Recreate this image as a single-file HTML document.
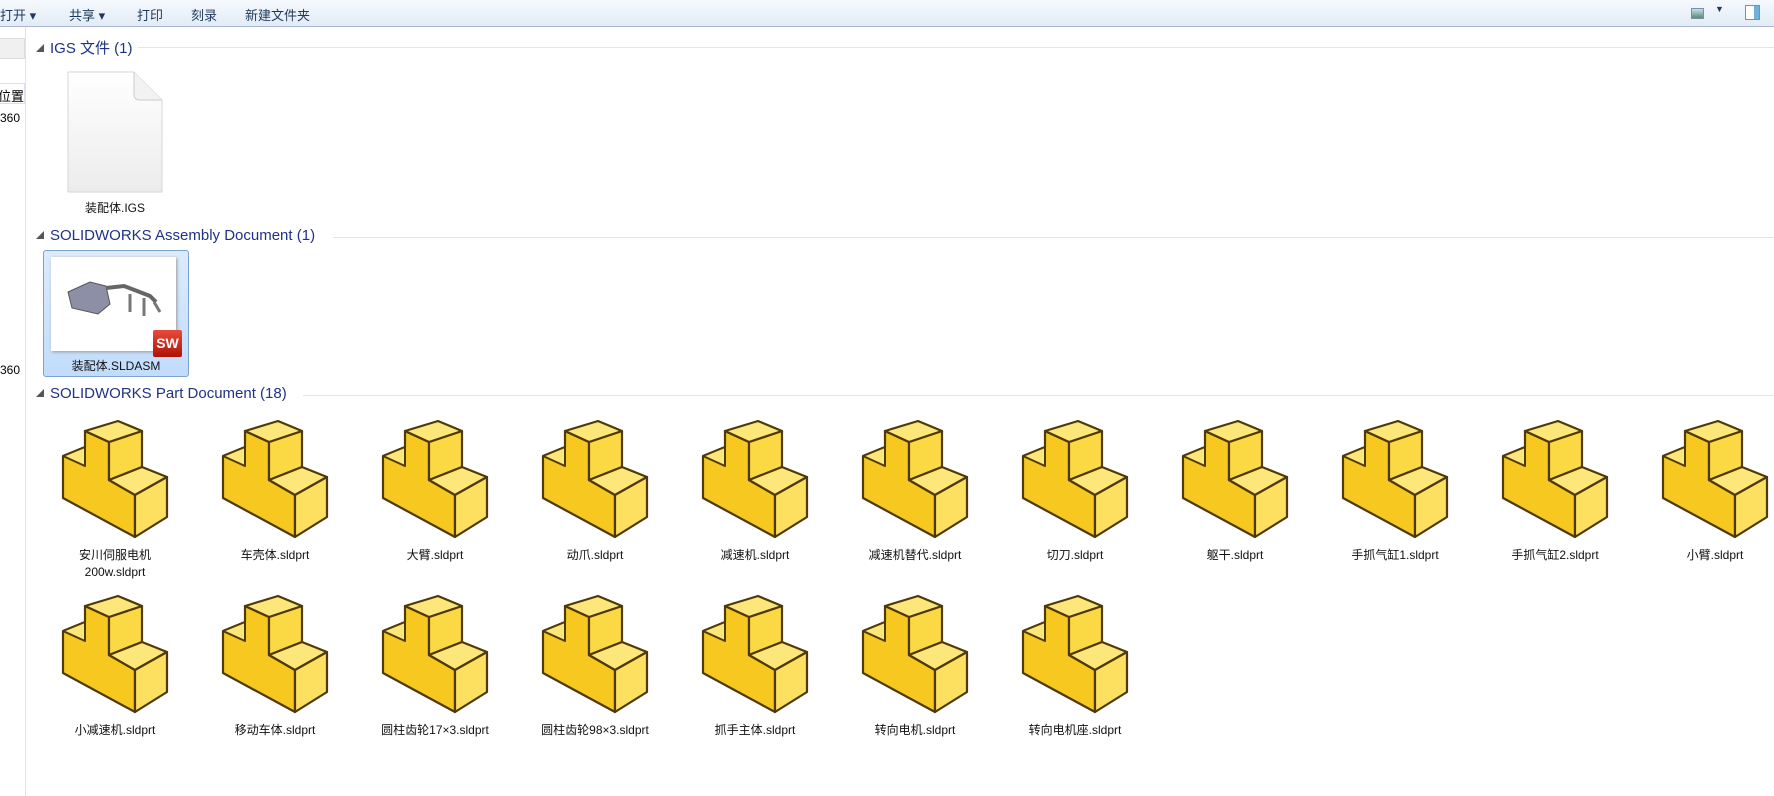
<!DOCTYPE html>
<html><head><meta charset="utf-8"><style>
*{margin:0;padding:0;box-sizing:border-box}
body{width:1774px;height:796px;overflow:hidden;background:#fff;font-family:"Liberation Sans","Noto Sans CJK SC",sans-serif;position:relative}
.tb{position:absolute;left:0;top:0;width:1774px;height:27px;background:linear-gradient(#f5f9fd,#e2ebf6);border-bottom:1px solid #a9b8cc}
.tb span{position:absolute;top:5px;font-size:13px;color:#1e395b}
.left{position:absolute;left:0;top:27px;width:26px;height:769px;border-right:1px solid #dde4ee;background:#fff;overflow:hidden}
.h{position:absolute;left:36px;font-size:15px;color:#1e3287;white-space:nowrap}
.h i{font-style:normal;font-size:8px;color:#555;margin-right:6px;position:relative;top:-2px}
.line{position:absolute;height:1px;background:#e2e6ec;right:0}
.lbl{position:absolute;width:150px;text-align:center;font-size:12px;color:#111;line-height:17px}
.ic{position:absolute}
</style></head><body>
<div class="tb">
<span style="left:0">打开 ▾</span>
<span style="left:69px">共享 ▾</span>
<span style="left:137px">打印</span>
<span style="left:191px">刻录</span>
<span style="left:245px">新建文件夹</span>
<div style="position:absolute;left:1691px;top:8px;width:13px;height:11px;border:1px solid #7d8fa6;background:linear-gradient(#bfe0f5,#5c8b6a)"></div>
<span style="left:1715px;top:4px;font-size:9px">▼</span>
<div style="position:absolute;left:1745px;top:5px;width:15px;height:15px;border:1px solid #7d8fa6;background:linear-gradient(90deg,#fff 60%,#6fb1da 60%)"></div>
</div>
<div class="left">
<div style="position:absolute;left:0;top:11px;width:25px;height:21px;background:#f0f0f0;border:1px solid #ddd;border-left:none"></div>
<div style="position:absolute;right:0;top:56px;width:40px;height:21px;border:1px solid #dde;border-left:none;font-size:13px;padding-top:2px;white-space:nowrap;text-align:right">的位置</div>
<div style="position:absolute;left:0;top:84px;font-size:12px">360</div>
<div style="position:absolute;left:0;top:336px;font-size:12px">360</div>
</div>

<div class="h" style="top:37px"><i>◢</i>IGS 文件 (1)</div><div class="line" style="left:138px;top:47px"></div>
<div class="h" style="top:227px"><i>◢</i>SOLIDWORKS Assembly Document (1)</div><div class="line" style="left:333px;top:237px"></div>
<div class="h" style="top:385px"><i>◢</i>SOLIDWORKS Part Document (18)</div><div class="line" style="left:303px;top:395px"></div>

<svg style="position:absolute;left:66px;top:70px" width="100" height="125"><defs><linearGradient id="pg" x1="0" y1="0" x2="0" y2="1"><stop offset="0" stop-color="#fff"/><stop offset="1" stop-color="#ececec"/></linearGradient></defs>
<path d="M2 2 H68 L96 30 V122 H2 Z" fill="url(#pg)" stroke="#d6d6d6"/><path d="M68 2 V24 Q68 30 74 30 H96" fill="#f2f2f2" stroke="#ccc"/></svg>
<div class="lbl" style="left:40px;top:200px">装配体.IGS</div>

<div style="position:absolute;left:43px;top:250px;width:146px;height:127px;border:1px solid #7da2ce;border-radius:3px;background:linear-gradient(#dcebfc,#c1dcfc)"></div>
<div style="position:absolute;left:51px;top:257px;width:125px;height:94px;background:#fff;box-shadow:1px 1px 3px #999"></div>
<svg style="position:absolute;left:60px;top:270px" width="110" height="60">
<path d="M8 22 L30 12 L46 16 L50 34 L38 44 L12 38 Z" fill="#8d8fa6" stroke="#555"/>
<path d="M46 18 L64 16 L90 26 L96 32" stroke="#666" stroke-width="4" fill="none"/>
<path d="M70 24 V42 M84 28 V46 M94 32 L100 42" stroke="#777" stroke-width="3"/></svg>
<div style="position:absolute;left:153px;top:330px;width:29px;height:27px;background:linear-gradient(#e84a3a,#b01208);border-radius:2px;color:#fff;font-weight:bold;font-size:14px;text-align:center;line-height:27px">SW</div>
<div class="lbl" style="left:41px;top:358px">装配体.SLDASM</div>

<svg width="0" height="0" style="position:absolute"><defs><g id="t">
<path d="M23 54 L45 45 L45 29 L69 40 L69 78 L95 93 L95 135 L23 96 Z" fill="#f6c820" stroke="#4d3a08" stroke-width="2.2" stroke-linejoin="round"/>
<path d="M69 40 L102 29 L102 65 L69 78 Z" fill="#fbd944" stroke="#4d3a08" stroke-width="2.2" stroke-linejoin="round"/>
<path d="M45 29 L78 19 L102 29 L69 40 Z" fill="#fde77a" stroke="#4d3a08" stroke-width="2.2" stroke-linejoin="round"/>
<path d="M69 78 L102 65 L127 75 L95 93 Z" fill="#fde77a" stroke="#4d3a08" stroke-width="2.2" stroke-linejoin="round"/>
<path d="M95 93 L127 75 L127 115 L95 135 Z" fill="#fde060" stroke="#4d3a08" stroke-width="2.2" stroke-linejoin="round"/>
<path d="M23 54 L45 45 L45 64 Z" fill="#fde77a" stroke="#4d3a08" stroke-width="2" stroke-linejoin="round"/>
</g></defs></svg>

<div id="g"></div>
<script>
var n1=["安川伺服电机<br>200w.sldprt","车壳体.sldprt","大臂.sldprt","动爪.sldprt","减速机.sldprt","减速机替代.sldprt","切刀.sldprt","躯干.sldprt","手抓气缸1.sldprt","手抓气缸2.sldprt","小臂.sldprt"];
var n2=["小减速机.sldprt","移动车体.sldprt","圆柱齿轮17×3.sldprt","圆柱齿轮98×3.sldprt","抓手主体.sldprt","转向电机.sldprt","转向电机座.sldprt"];
var h="";
function add(arr,iy,ly){arr.forEach(function(t,i){var c=115+160*i;
h+='<svg class="ic" style="left:'+(c-75)+'px;top:'+iy+'px" viewBox="0 0 150 140" width="150" height="140"><use href="#t"/></svg>';
h+='<div class="lbl" style="left:'+(c-75)+'px;top:'+ly+'px">'+t+'</div>';});}
add(n1,402,547);add(n2,577,722);
document.getElementById("g").innerHTML=h;
</script>
</body></html>
